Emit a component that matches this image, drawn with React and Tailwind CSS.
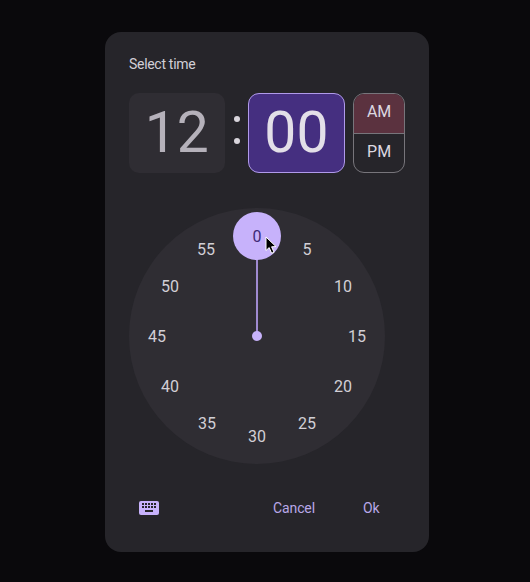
const nums = [
  { t: "5", c: "left-[178px] top-[42px]" },
  { t: "10", c: "left-[214px] top-[79px]" },
  { t: "15", c: "left-[228px] top-[129px]" },
  { t: "20", c: "left-[214px] top-[179px]" },
  { t: "25", c: "left-[178px] top-[216px]" },
  { t: "30", c: "left-[128px] top-[229px]" },
  { t: "35", c: "left-[78px] top-[216px]" },
  { t: "40", c: "left-[41px] top-[179px]" },
  { t: "45", c: "left-[28px] top-[129px]" },
  { t: "50", c: "left-[41px] top-[79px]" },
  { t: "55", c: "left-[77px] top-[42px]" },
];

export default function App() {
  return (
    <div className="w-[530px] h-[582px] bg-[#0a090c] pt-8 pl-[105px] font-['Roboto',sans-serif] overflow-hidden">
      <div className="w-[324px] h-[520px] rounded-[16px] bg-[#26252a] px-6 pt-6 flex flex-col">
        <div className="h-4 flex items-center text-[14px] leading-5 text-[#d2cfd6] tracking-[-0.3px]">Select time</div>
        <div className="mt-[21px] flex items-start">
          <div className="w-24 h-20 rounded-[10px] bg-[#2f2d33] flex items-center justify-center text-[57px] leading-none text-[#b5b1ba] pb-[2px]">12</div>
          <div className="w-[23px] h-20 flex flex-col items-center justify-center gap-[16px] pb-[6px] pl-[1px]">
            <span className="size-[6px] rounded-full bg-[#d8d5dc]"></span>
            <span className="size-[6px] rounded-full bg-[#d8d5dc]"></span>
          </div>
          <div className="w-[98px] h-20 rounded-[11px] bg-[#452f80] border border-[#b09aea] flex items-center justify-center text-[57px] leading-none text-[#e3dfe8] pb-[2px]">00</div>
          <div className="ml-[8px] w-[52px] h-20 rounded-[11px] border border-[#77757b] overflow-hidden flex flex-col text-[16px] text-[#dcd8e0]">
            <div className="h-[40px] bg-[#5b323f] border-b border-[#77757b] flex items-center justify-center pb-[3px]">AM</div>
            <div className="flex-1 flex items-center justify-center pb-[2px]">PM</div>
          </div>
        </div>
        <div className="relative mt-[35px] size-64 rounded-full bg-[#2f2d33] text-[16px] text-[#d2cfd6]">
          {nums.map((n) => (
            <div key={n.t} className={`absolute size-0 flex items-center justify-center whitespace-nowrap ${n.c}`}>{n.t}</div>
          ))}
          <div className="absolute left-[127px] top-[48px] w-[2px] h-[80px] bg-[#9f8ad0]"></div>
          <div className="absolute left-[123px] top-[123px] size-[10px] rounded-full bg-[#c7b2fb]"></div>
          <div className="absolute left-[104px] top-[4px] size-12 rounded-full bg-[#c7b2fb] flex items-center justify-center text-[#3f2a77] pt-[2px]">0</div>
          <svg className="absolute left-[136px] top-[28px]" width="13" height="19" viewBox="0 0 13 19">
            <path d="M1 1 L1 14.5 L4.2 11.6 L6.6 17.2 L9 16.2 L6.6 10.8 L11 10.6 Z" fill="#000" stroke="#fff" strokeWidth="1" />
          </svg>
        </div>
        <div className="mt-[26px] h-9 flex items-center">
          <svg className="ml-[10px]" width="20" height="14" viewBox="0 0 20 14">
            <rect x="0" y="0" width="20" height="14" rx="2" fill="#c7b2fb" />
            <g fill="#26252a">
              <rect x="3" y="2" width="2" height="2" /><rect x="6" y="2" width="2" height="2" /><rect x="9" y="2" width="2" height="2" /><rect x="12" y="2" width="2" height="2" /><rect x="15" y="2" width="2" height="2" />
              <rect x="3" y="5" width="2" height="2" /><rect x="6" y="5" width="2" height="2" /><rect x="9" y="5" width="2" height="2" /><rect x="12" y="5" width="2" height="2" /><rect x="15" y="5" width="2" height="2" />
              <rect x="6" y="9" width="8" height="2" />
            </g>
          </svg>
          <div className="ml-auto mr-[48px] text-[14px] text-[#b9a8e8] tracking-[-0.1px]">Cancel</div>
          <div className="mr-[25px] w-[17px] text-[14px] text-[#b9a8e8] tracking-[-0.1px]">Ok</div>
        </div>
      </div>
    </div>
  );
}
